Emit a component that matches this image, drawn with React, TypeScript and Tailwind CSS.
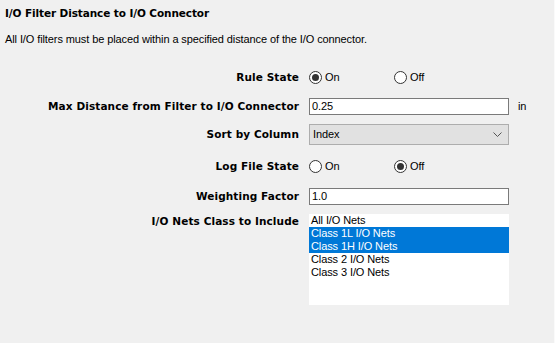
import React from 'react';

const font = { fontFamily: '"Liberation Sans", Arial, sans-serif' };
const boldFont = { fontFamily: '"DejaVu Sans", Verdana, sans-serif' };

function Radio({ checked, label }: { checked?: boolean; label: string }) {
  return (
    <div className="flex items-center gap-[3px]">
      <span className="flex h-[13px] w-[13px] items-center justify-center rounded-full border border-[#333] bg-white">
        {checked && <span className="h-[7px] w-[7px] rounded-full bg-[#333]" />}
      </span>
      <span>{label}</span>
    </div>
  );
}

function Label({ children }: { children: React.ReactNode }) {
  return (
    <div
      className="w-[299px] shrink-0 text-right text-[10.5px] font-bold tracking-[0.1px]"
      style={boldFont}
    >
      {children}
    </div>
  );
}

const nets = [
  { name: 'All I/O Nets', selected: false },
  { name: 'Class 1L I/O Nets', selected: true },
  { name: 'Class 1H I/O Nets', selected: true },
  { name: 'Class 2 I/O Nets', selected: false },
  { name: 'Class 3 I/O Nets', selected: false },
];

export default function App() {
  return (
    <div
      className="h-[343px] w-[555px] overflow-hidden border-r border-[#fafafa] bg-[#f0f0f0] text-[11px] leading-[13px] tracking-[-0.1px] text-black"
      style={font}
    >
      <div className="pl-[5px] pt-[6px] text-[10.5px] font-bold leading-[14px]" style={boldFont}>
        I/O Filter Distance to I/O Connector
      </div>
      <div className="mt-[12px] pl-[5px] leading-[14px]">
        All I/O filters must be placed within a specified distance of the I/O connector.
      </div>

      <div className="mt-[21px] flex h-[20px] items-center gap-[10px]">
        <Label>Rule State</Label>
        <div className="flex items-center">
          <div className="w-[85px]">
            <Radio checked label="On" />
          </div>
          <Radio label="Off" />
        </div>
      </div>

      <div className="mt-[11px] flex h-[17px] items-center gap-[10px]">
        <Label>Max Distance from Filter to I/O Connector</Label>
        <div className="flex h-[17px] w-[200px] items-center border border-[#7a7a7a] bg-white px-[2px]">
          0.25
        </div>
        <span className="ml-[-1px]">in</span>
      </div>

      <div className="mt-[9px] flex h-[21px] items-center gap-[10px]">
        <Label>Sort by Column</Label>
        <div className="flex h-[21px] w-[200px] items-center justify-between border border-[#adadad] bg-[#e1e1e1] pl-[3px] pr-[5px]">
          <span>Index</span>
          <svg width="9" height="5" viewBox="0 0 9 5" className="mr-[1px]">
            <path d="M0.5 0.5 L4.5 4.5 L8.5 0.5" fill="none" stroke="#555" strokeWidth="1" />
          </svg>
        </div>
      </div>

      <div className="mt-[11px] flex h-[20px] items-center gap-[10px]">
        <Label>Log File State</Label>
        <div className="flex items-center">
          <div className="w-[85px]">
            <Radio label="On" />
          </div>
          <Radio checked label="Off" />
        </div>
      </div>

      <div className="mt-[12px] flex h-[17px] items-center gap-[10px]">
        <Label>Weighting Factor</Label>
        <div className="flex h-[17px] w-[200px] items-center border border-[#7a7a7a] bg-white px-[2px]">
          1.0
        </div>
      </div>

      <div className="mt-[9px] flex items-start gap-[10px]">
        <Label>
          <div className="pt-[1px]">I/O Nets Class to Include</div>
        </Label>
        <div className="h-[91px] w-[200px] bg-white">
          {nets.map((n) => (
            <div
              key={n.name}
              className={
                'h-[13px] pl-[2px] leading-[13px] ' +
                (n.selected ? 'bg-[#0078d7] text-white' : '')
              }
            >
              {n.name}
            </div>
          ))}
        </div>
      </div>
    </div>
  );
}
